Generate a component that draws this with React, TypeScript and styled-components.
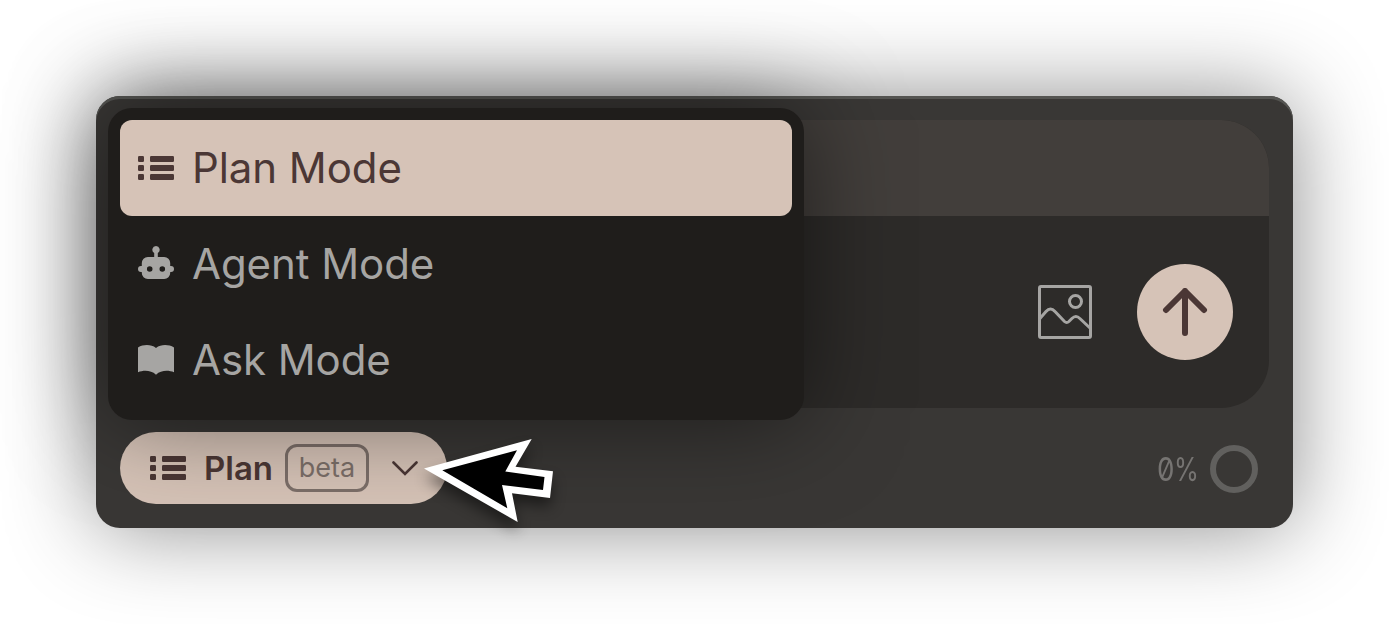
import type { ReactNode } from 'react'
import styled, { createGlobalStyle } from 'styled-components'

const GlobalStyle = createGlobalStyle`
    body {
        margin: 0;
        background: #fff;
        overflow: hidden;
    }
`

const Stage = styled.main`
    box-sizing: border-box;
    width: 1389px;
    height: 624px;
    padding: 96px;
    overflow: hidden;
    font-family: Inter, sans-serif;
`

const Panel = styled.section`
    position: relative;
    box-sizing: border-box;
    display: flex;
    flex-direction: column;
    gap: 24px;
    height: 432px;
    padding: 24px;
    border-radius: 24px;
    background: #393735;
    box-shadow: 0 0 90px rgba(0, 0, 0, 0.45), inset 0 3px 0 #555552;
`

const Composer = styled.div`
    display: flex;
    flex-direction: column;
    height: 288px;
    border-radius: 48px;
    overflow: hidden;
    background: #2d2b29;
`

const ComposerHeader = styled.div`
    height: 96px;
    background: #423e3b;
`

const ComposerActions = styled.div`
    box-sizing: border-box;
    display: flex;
    flex: 1;
    align-items: center;
    justify-content: flex-end;
    gap: 45px;
    padding-right: 36px;
    color: #a6a5a3;
`

const SendButton = styled.button`
    display: flex;
    align-items: center;
    justify-content: center;
    width: 96px;
    height: 96px;
    padding: 0;
    border: 0;
    border-radius: 50%;
    background: #d6c3b7;
    color: #4b3735;
`

const Footer = styled.footer`
    display: flex;
    align-items: center;
    justify-content: space-between;
    height: 72px;
`

const ModePill = styled.button`
    box-sizing: border-box;
    display: flex;
    align-items: center;
    width: 327px;
    height: 72px;
    padding: 0 29px 0 30px;
    border: 0;
    border-radius: 36px;
    background: #d6c3b7;
    color: #4b3735;
    font-family: inherit;
`

const PillLabel = styled.span`
    width: 69px;
    margin: 0 12px 0 18px;
    font-size: 33px;
    font-weight: 600;
    line-height: 40px;
    text-align: left;
`

const BetaTag = styled.span`
    box-sizing: border-box;
    width: 84px;
    height: 48px;
    margin-right: 23px;
    border: 3px solid #7c6f69;
    border-radius: 12px;
    color: #7c6f69;
    font-size: 27px;
    line-height: 41px;
    text-align: center;
`

const Usage = styled.div`
    display: flex;
    align-items: center;
    gap: 12px;
    padding: 1px 11px 0 0;
    color: #767472;
    font-size: 33px;
    line-height: 40px;
`

const Percent = styled.span`
    display: flex;
    width: 41px;
    font-feature-settings: 'zero';
`

const NarrowGlyph = styled.span<{ $scale: number }>`
    flex: 0 0 18px;
    transform: scaleX(${({ $scale }) => $scale});
    transform-origin: left;

    & + & {
        margin-left: -4px;
    }
`

const UsageRing = styled.span`
    box-sizing: border-box;
    width: 48px;
    height: 48px;
    border: 6px solid #61605e;
    border-radius: 50%;
`

// Opens over the composer and the panel edge
const Menu = styled.div`
    position: absolute;
    top: 12px;
    left: 12px;
    box-sizing: border-box;
    width: 696px;
    padding: 12px;
    border-radius: 24px;
    background: #1f1d1b;
    box-shadow: 0 0 96px rgba(0, 0, 0, 0.5);
`

const MenuItem = styled.div<{ $active?: boolean }>`
    box-sizing: border-box;
    display: flex;
    align-items: center;
    gap: 18px;
    height: 96px;
    padding: 0 18px;
    border-radius: 12px;
    background: ${({ $active }) => ($active ? '#d6c3b7' : 'transparent')};
    color: ${({ $active }) => ($active ? '#4b3735' : '#a6a5a3')};
    font-size: 42px;
    line-height: 52px;
    letter-spacing: -0.07px;
`

const Pointer = styled.svg`
    position: absolute;
    top: 334px;
    left: 320px;
    overflow: visible;
    filter: drop-shadow(0 9px 7px rgba(0, 0, 0, 0.45));
`

const ListIcon = () => (
    <svg width="36" height="36" viewBox="0 0 36 36" fill="currentColor">
        {[6, 15, 24].map((y) => (
            <g key={y}>
                <rect x="0" y={y} width="6" height="6" rx="1.2" />
                <rect x="12" y={y} width="24" height="6" rx="1.2" />
            </g>
        ))}
    </svg>
)

const RobotIcon = () => (
    <svg width="36" height="36" viewBox="0 0 36 36" fill="currentColor">
        <path
            fillRule="evenodd"
            d="M18 0a3.7 3.7 0 0 1 1.8 6.9V11h6.4a6 6 0 0 1 6 6v3.1h.8a3 3 0 0 1 0 6h-.8V27a6 6 0 0 1-6 6H9.8a6 6 0 0 1-6-6v-.9H3a3 3 0 0 1 0-6h.8V17a6 6 0 0 1 6-6h6.4V6.9A3.7 3.7 0 0 1 18 0ZM11.7 20.2a2.8 2.8 0 1 0 0 5.6 2.8 2.8 0 0 0 0-5.6Zm12.6 0a2.8 2.8 0 1 0 0 5.6 2.8 2.8 0 0 0 0-5.6Z"
        />
    </svg>
)

const BookIcon = () => (
    <svg width="36" height="36" viewBox="0 0 36 36" fill="currentColor">
        <path d="M0 5.5C5.5 2.3 13 2.2 18 6c5-3.8 12.5-3.7 18-.5v24.8c-5.5-2.2-13-2.2-18 2.4-5-4.6-12.5-4.6-18-2.4Z" />
    </svg>
)

const ImageIcon = () => (
    <svg width="54" height="54" viewBox="0 0 54 54" fill="none" stroke="currentColor" strokeWidth="3">
        <rect x="1.5" y="1.5" width="51" height="51" rx="1.5" />
        <circle cx="37.5" cy="16.5" r="6" />
        <path d="M1.5 34 8 26.5q4.5-5 9 0L26.5 36.5q2.2 2 4.4 0l3-3q4-4 8 0L52.5 43.5" />
    </svg>
)

const ArrowIcon = () => (
    <svg width="48" height="48" viewBox="0 0 48 48" fill="none" stroke="currentColor" strokeWidth="6" strokeLinecap="round" strokeLinejoin="round">
        <path d="M24 45V3M5 22 24 3l19 19" />
    </svg>
)

const ChevronIcon = () => (
    <svg width="26" height="16" viewBox="0 0 26 16" fill="none" stroke="currentColor" strokeWidth="2.6" strokeLinecap="round">
        <path d="m1.5 2.5 11.5 11.5 11.5-11.5" />
    </svg>
)

const modes: { label: string; icon: ReactNode }[] = [
    { label: 'Plan Mode', icon: <ListIcon /> },
    { label: 'Agent Mode', icon: <RobotIcon /> },
    { label: 'Ask Mode', icon: <BookIcon /> },
]

const App = () => {
    return (
        <>
            <GlobalStyle />
            <Stage>
                <Panel>
                    <Composer>
                        <ComposerHeader />
                        <ComposerActions>
                            <ImageIcon />
                            <SendButton aria-label="Send">
                                <ArrowIcon />
                            </SendButton>
                        </ComposerActions>
                    </Composer>
                    <Footer>
                        <ModePill>
                            <ListIcon />
                            <PillLabel>Plan</PillLabel>
                            <BetaTag>beta</BetaTag>
                            <ChevronIcon />
                        </ModePill>
                        <Usage>
                            <Percent>
                                <NarrowGlyph $scale={0.84}>0</NarrowGlyph>
                                <NarrowGlyph $scale={0.77}>%</NarrowGlyph>
                            </Percent>
                            <UsageRing />
                        </Usage>
                    </Footer>
                    <Menu>
                        {modes.map((mode, index) => (
                            <MenuItem key={mode.label} $active={index === 0}>
                                {mode.icon}
                                <span>{mode.label}</span>
                            </MenuItem>
                        ))}
                    </Menu>
                    <Pointer width="144" height="100" viewBox="416 430 144 100">
                        <path fill="#fff" d="M424 468.5 531.7 439 515.5 466.8 553 471.2 550 498 512 493.2 517.7 522Z" />
                        <path fill="#000" d="M442.3 470.3 517 450.3 505.3 471.5 544.5 477 543 490 502 485 507.3 508.3Z" />
                    </Pointer>
                </Panel>
            </Stage>
        </>
    )
}

export default App
